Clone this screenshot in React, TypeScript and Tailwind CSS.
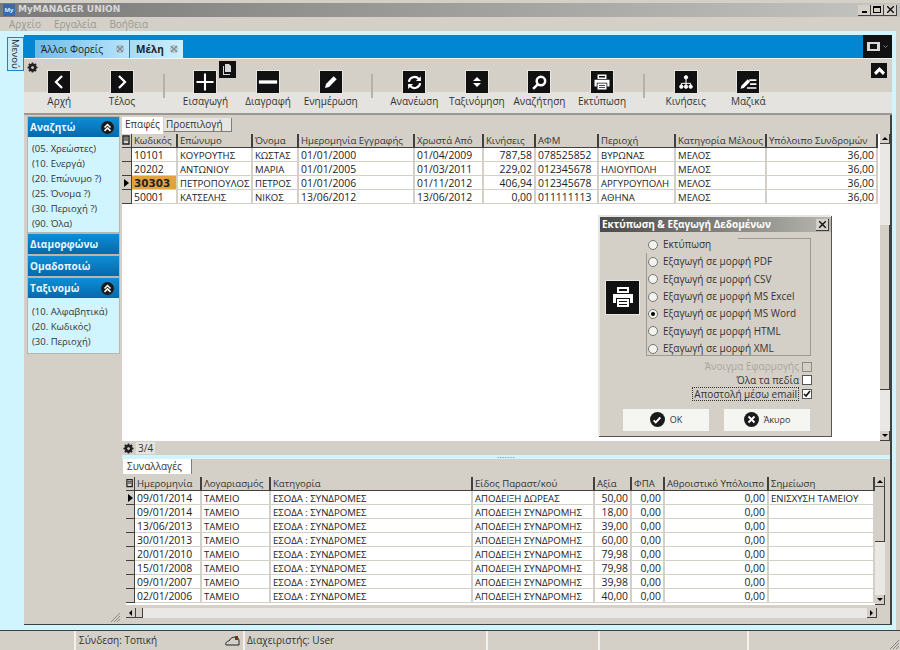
import type { ReactNode } from "react";

const ICON = "h-[24px] w-[24px] bg-[#111111] border border-[#e8e6e0] flex items-center justify-center text-white";

function Svg({ children, size = 18 }: { children: ReactNode; size?: number }) {
  return (
    <svg width={size} height={size} viewBox="0 0 24 24" fill="none" stroke="currentColor" strokeWidth="3" strokeLinecap="square" strokeLinejoin="miter">
      {children}
    </svg>
  );
}

function PrinterGlyph({ size = 18 }: { size?: number }) {
  return (
    <svg width={size} height={size} viewBox="0 0 24 24" fill="currentColor">
      <path fillRule="evenodd" d="M6 2h12v6H6zM8 4v2h8V4z" />
      <path d="M2 9h20v9h-3v-5H5v5H2z" />
      <path fillRule="evenodd" d="M6 14h12v8H6zM8 16v1h8v-1zM8 19v1h8v-1z" />
    </svg>
  );
}

const tools: (null | { label: string; icon: ReactNode })[] = [
  { label: "Αρχή", icon: <Svg><path d="M15 5l-7 7 7 7" /></Svg> },
  { label: "Τέλος", icon: <Svg><path d="M9 5l7 7-7 7" /></Svg> },
  null,
  { label: "Εισαγωγή", icon: <Svg size={20}><path d="M12 3v18M3 12h18" strokeWidth="2.5" /></Svg> },
  { label: "Διαγραφή", icon: <Svg size={20}><path d="M3 12h18" strokeWidth="4" /></Svg> },
  {
    label: "Ενημέρωση",
    icon: (
      <svg width="16" height="16" viewBox="0 0 24 24" fill="currentColor">
        <path d="M3 21l1.5-6L16 3.5l4.5 4.5L9 19.5z" />
      </svg>
    ),
  },
  null,
  {
    label: "Ανανέωση",
    icon: (
      <svg width="17" height="17" viewBox="0 0 24 24" fill="none" stroke="currentColor" strokeWidth="3">
        <path d="M4 11a8 8 0 0 1 14-4l2 2" />
        <path d="M20 13a8 8 0 0 1-14 4l-2-2" />
        <path d="M21 3v7h-7z" fill="currentColor" strokeWidth="0" />
        <path d="M3 21v-7h7z" fill="currentColor" strokeWidth="0" />
      </svg>
    ),
  },
  {
    label: "Ταξινόμηση",
    icon: (
      <svg width="12" height="14" viewBox="0 0 24 24" fill="currentColor">
        <path d="M12 2l8 8H4zM12 22l-8-8h16z" />
      </svg>
    ),
  },
  {
    label: "Αναζήτηση",
    icon: (
      <svg width="17" height="17" viewBox="0 0 24 24" fill="none" stroke="currentColor" strokeWidth="3.5">
        <circle cx="14" cy="10" r="6" />
        <path d="M9.5 14.5L3 21" />
      </svg>
    ),
  },
  { label: "Εκτύπωση", icon: <PrinterGlyph /> },
  null,
  {
    label: "Κινήσεις",
    icon: (
      <svg width="16" height="16" viewBox="0 0 24 24" fill="currentColor" stroke="currentColor" strokeWidth="1.5">
        <circle cx="12" cy="5" r="2.5" />
        <circle cx="5" cy="19" r="2.5" />
        <circle cx="12" cy="19" r="2.5" />
        <circle cx="19" cy="19" r="2.5" />
        <path d="M12 5v14M5 19v-5h14v5" fill="none" />
      </svg>
    ),
  },
  {
    label: "Μαζικά",
    icon: (
      <svg width="19" height="19" viewBox="0 0 24 24" fill="currentColor">
        <path d="M2 20l1-4 8-8 3 3-8 8z" />
        <path d="M13 8h9v2h-9zM14 13h8v2h-8zM10 18h12v2H10z" />
      </svg>
    ),
  },
];

function Chevrons() {
  return (
    <span className="h-[13px] w-[13px] rounded-full bg-[#1a1a1a] flex items-center justify-center text-white">
      <svg width="9" height="9" viewBox="0 0 24 24" fill="none" stroke="currentColor" strokeWidth="4">
        <path d="M4 12l8-8 8 8M4 21l8-8 8 8" />
      </svg>
    </span>
  );
}

function Gear({ size = 11 }: { size?: number }) {
  return (
    <svg width={size} height={size} viewBox="0 0 24 24" className="text-[#222222]">
      <circle cx="12" cy="12" r="6.5" fill="none" stroke="currentColor" strokeWidth="5" />
      <path d="M12 1v22M1 12h22M4.2 4.2l15.6 15.6M19.8 4.2L4.2 19.8" stroke="currentColor" strokeWidth="3.5" />
      <circle cx="12" cy="12" r="3" fill="#d4d0c8" />
    </svg>
  );
}

function SideGroup({ title, items, pad }: { title: string; items?: string[]; pad?: string }) {
  return (
    <div className="border border-[#b8b6ae]">
      <div className="h-[20px] bg-gradient-to-b from-[#0d8ed6] to-[#0669ac] flex items-center justify-between pl-[2px] pr-[5px] text-[10px] font-bold tracking-[0.1px] text-[#eaf6ff]">
        <span>{title}</span>
        {items ? <Chevrons /> : null}
      </div>
      {items ? (
        <div className={`bg-[#d0f5ff] pl-[4px] flex flex-col ${pad ?? ""}`}>
          {items.map((t) => (
            <div key={t} className="h-[15px] leading-[15px] text-[9.5px] text-[#333333] whitespace-nowrap">
              {t}
            </div>
          ))}
        </div>
      ) : null}
    </div>
  );
}

function RowHead({ arrow }: { arrow?: boolean }) {
  return (
    <div className="bg-[#d4d0c8] border-r border-b border-[#404040] flex items-center justify-center">
      {arrow ? <span className="h-0 w-0 border-y-[4px] border-l-[5px] border-y-transparent border-l-black" /> : null}
    </div>
  );
}

type Col = { r?: boolean };

function DataGrid({
  cols,
  template,
  head,
  rows,
  active,
}: {
  cols: Col[];
  template: string;
  head: string[];
  rows: string[][];
  active?: boolean;
}) {
  return (
    <div className={`grid ${template} auto-rows-[14px] text-[#222222]`}>
      <div className="h-[15px] bg-[#d4d0c8] border-r border-b-2 border-[#404040] flex items-start justify-center">
        <svg width="9" height="11" viewBox="0 0 9 11" className="mt-[1px]">
          <path d="M1 1h6v8H1z" fill="none" stroke="#222" strokeWidth="1.4" />
          <path d="M2 3h4M2 5h4" stroke="#222" />
        </svg>
      </div>
      {head.map((h) => (
        <div key={h} className="h-[15px] leading-[14px] text-[9.6px] bg-[#d4d0c8] border-b-2 border-r-2 border-b-[#404040] border-r-[#404040] pl-[2px] overflow-hidden whitespace-nowrap text-[#333333]">
          {h}
        </div>
      ))}
      {rows.map((row, ri) => [
        <RowHead key={`h${ri}`} arrow={active ? ri === 2 : ri === 0} />,
        ...row.map((c, ci) => {
          const hot = active && ri === 2 && ci === 0;
          const num = /^[\d/,]+$/.test(c);
          return (
            <div
              key={`${ri}-${ci}`}
              className={`leading-[15px] border-r-2 border-b border-[#d4d0c8] px-[2px] overflow-hidden whitespace-nowrap ${num ? "text-[10.4px]" : "text-[9.6px]"} ${cols[ci].r ? "text-right" : ""} ${hot ? "bg-[#e4a23c] font-['DejaVu_Sans'] font-bold" : "bg-white"}`}
            >
              {c}
            </div>
          );
        }),
      ])}
    </div>
  );
}

function VScroll({ children }: { children: ReactNode }) {
  return (
    <div className="w-[10px] flex flex-col bg-[#e9e8e4] shrink-0">
      <ScrollBtn dir="up" />
      {children}
      <div className="flex-1" />
      <ScrollBtn dir="down" />
    </div>
  );
}

function ScrollBtn({ dir }: { dir: "up" | "down" | "left" | "right" }) {
  const tri =
    dir === "up"
      ? "border-x-[3px] border-b-[3px] border-x-transparent border-b-black"
      : dir === "down"
        ? "border-x-[3px] border-t-[3px] border-x-transparent border-t-black"
        : dir === "left"
          ? "border-y-[3px] border-r-[3px] border-y-transparent border-r-black"
          : "border-y-[3px] border-l-[3px] border-y-transparent border-l-black";
  return (
    <div className="h-[10px] w-[10px] shrink-0 bg-[#d4d0c8] border-r border-b border-[#404040] flex items-center justify-center">
      <span className={`h-0 w-0 ${tri}`} />
    </div>
  );
}

const topCols: Col[] = [{}, {}, {}, {}, {}, { r: true }, {}, {}, {}, { r: true }];
const topHead = ["Κωδικός", "Επώνυμο", "Όνομα", "Ημερομηνία Εγγραφής", "Χρωστά Από", "Κινήσεις", "ΑΦΜ", "Περιοχή", "Κατηγορία Μέλους", "Υπόλοιπο Συνδρομών"];
const topRows = [
  ["10101", "ΚΟΥΡΟΥΤΗΣ", "ΚΩΣΤΑΣ", "01/01/2000", "01/04/2009", "787,58", "078525852", "ΒΥΡΩΝΑΣ", "ΜΕΛΟΣ", "36,00"],
  ["20202", "ΑΝΤΩΝΙΟΥ", "ΜΑΡΙΑ", "01/01/2005", "01/03/2011", "229,02", "012345678", "ΗΛΙΟΥΠΟΛΗ", "ΜΕΛΟΣ", "36,00"],
  ["30303", "ΠΕΤΡΟΠΟΥΛΟΣ", "ΠΕΤΡΟΣ", "01/01/2006", "01/11/2012", "406,94", "012345678", "ΑΡΓΥΡΟΥΠΟΛΗ", "ΜΕΛΟΣ", "36,00"],
  ["50001", "ΚΑΤΣΕΛΗΣ", "ΝΙΚΟΣ", "13/06/2012", "13/06/2012", "0,00", "011111113", "ΑΘΗΝΑ", "ΜΕΛΟΣ", "36,00"],
];

const lowCols: Col[] = [{}, {}, {}, {}, { r: true }, { r: true }, { r: true }, {}];
const lowHead = ["Ημερομηνία", "Λογαριασμός", "Κατηγορία", "Είδος Παραστ/κού", "Αξία", "ΦΠΑ", "Αθροιστικό Υπόλοιπο", "Σημείωση"];
const lowData: [string, string, string, string][] = [
  ["09/01/2014", "ΑΠΟΔΕΙΞΗ ΔΩΡΕΑΣ", "50,00", "ΕΝΙΣΧΥΣΗ ΤΑΜΕΙΟΥ"],
  ["09/01/2014", "ΑΠΟΔΕΙΞΗ ΣΥΝΔΡΟΜΗΣ", "18,00", ""],
  ["13/06/2013", "ΑΠΟΔΕΙΞΗ ΣΥΝΔΡΟΜΗΣ", "39,00", ""],
  ["30/01/2013", "ΑΠΟΔΕΙΞΗ ΣΥΝΔΡΟΜΗΣ", "60,00", ""],
  ["20/01/2010", "ΑΠΟΔΕΙΞΗ ΣΥΝΔΡΟΜΗΣ", "79,98", ""],
  ["15/01/2008", "ΑΠΟΔΕΙΞΗ ΣΥΝΔΡΟΜΗΣ", "79,98", ""],
  ["09/01/2007", "ΑΠΟΔΕΙΞΗ ΣΥΝΔΡΟΜΗΣ", "39,98", ""],
  ["02/01/2006", "ΑΠΟΔΕΙΞΗ ΣΥΝΔΡΟΜΗΣ", "40,00", ""],
];
const lowRows = lowData.map(([d, e, v, n]) => [d, "ΤΑΜΕΙΟ", "ΕΣΟΔΑ : ΣΥΝΔΡΟΜΕΣ", e, v, "0,00", "0,00", n]);

const radios = ["Εκτύπωση", "Εξαγωγή σε μορφή PDF", "Εξαγωγή σε μορφή CSV", "Εξαγωγή σε μορφή MS Excel", "Εξαγωγή σε μορφή MS Word", "Εξαγωγή σε μορφή HTML", "Εξαγωγή σε μορφή XML"];

function PrintDialog() {
  return (
    <div className="absolute left-[598px] top-[215px] w-[233px] h-[221px] bg-[#d4d0c8] border-t-2 border-l-2 border-[#e8e6e0] shadow-[1px_1px_0_#555555] px-[5px] text-[10px] text-[#333333] flex flex-col">
      <div className="-mx-[5px] h-[15px] bg-gradient-to-r from-[#4a4a4a] to-[#b8b8b0] flex items-center justify-between pl-[2px] pr-[2px] text-[10px] font-bold text-white">
        <span>Εκτύπωση &amp; Εξαγωγή Δεδομένων</span>
        <span className="h-[12px] w-[13px] bg-[#d4d0c8] border-r border-b border-[#404040] flex items-center justify-center">
          <svg width="7" height="7" viewBox="0 0 7 7" stroke="#111" strokeWidth="1.4">
            <path d="M0 0l7 7M7 0L0 7" />
          </svg>
        </span>
      </div>
      <div className="flex mt-[6px]">
        <div className="w-[41px] flex items-center">
          <div className="h-[35px] w-[35px] bg-[#111111] border border-[#e8e6e0] flex items-center justify-center text-white">
            <PrinterGlyph size={24} />
          </div>
        </div>
        <div className="w-[165px] h-[118px] border border-[#9c9a92] pl-[1px] flex flex-col">
          <div className="-mt-[3px] flex flex-col">
            {radios.map((r, i) => (
              <div
                key={r}
                className={`h-[17.33px] flex items-center gap-[5px] shrink-0 whitespace-nowrap ${i === 0 ? "w-[92px] -ml-[2px] pl-[2px] bg-[#d4d0c8]" : ""}`}
              >
                <span className="h-[10px] w-[10px] rounded-full bg-[#f4f3ef] border border-[#77756e] flex items-center justify-center">
                  {i === 4 ? <span className="h-[4px] w-[4px] rounded-full bg-black" /> : null}
                </span>
                {r}
              </div>
            ))}
          </div>
        </div>
      </div>
      <div className="mt-[4px] pr-[14px] flex flex-col items-end">
        <div className="h-[13.5px] flex items-center gap-[3px] text-[#a8a69e]">
          Άνοιγμα Εφαρμογής <span className="h-[10px] w-[10px] border border-[#8e8c85]" />
        </div>
        <div className="h-[13.5px] flex items-center gap-[3px]">
          Όλα τα πεδία <span className="h-[10px] w-[10px] bg-white border border-[#555555]" />
        </div>
        <div className="h-[13.5px] flex items-center gap-[3px]">
          <span className="border border-dotted border-[#333333] px-[1px] leading-[12px]">Αποστολή μέσω email</span>
          <span className="h-[10px] w-[10px] bg-white border border-[#555555] flex items-center justify-center">
            <svg width="8" height="8" viewBox="0 0 8 8" fill="none" stroke="#111" strokeWidth="1.6">
              <path d="M1 4l2 2 4-5" />
            </svg>
          </span>
        </div>
      </div>
      <div className="mt-[8px] pl-[18px] flex gap-[15px] text-[9px]">
        <div className="h-[22px] w-[86px] bg-[#f5f5f2] flex items-center justify-center gap-[5px]">
          <span className="h-[15px] w-[15px] rounded-full bg-[#1a1a1a] flex items-center justify-center text-white">
            <svg width="10" height="10" viewBox="0 0 24 24" fill="none" stroke="currentColor" strokeWidth="4.5">
              <path d="M4 13l5 5L20 6" />
            </svg>
          </span>
          OK
        </div>
        <div className="h-[22px] w-[86px] bg-[#f5f5f2] flex items-center justify-center gap-[5px]">
          <span className="h-[15px] w-[15px] rounded-full bg-[#1a1a1a] flex items-center justify-center text-white">
            <svg width="9" height="9" viewBox="0 0 24 24" fill="none" stroke="currentColor" strokeWidth="5">
              <path d="M4 4l16 16M20 4L4 20" />
            </svg>
          </span>
          Άκυρο
        </div>
      </div>
    </div>
  );
}

function CloseX() {
  return (
    <svg width="8" height="8" viewBox="0 0 8 8" stroke="#8a8a88" strokeWidth="1.6">
      <path d="M1 1l6 6M7 1L1 7" />
      <circle cx="4" cy="4" r="3.4" fill="none" strokeWidth="0.6" />
    </svg>
  );
}

export default function App() {
  return (
    <div className="relative w-[900px] h-[650px] overflow-hidden bg-[#d4d0c8] pt-[3px] font-['Open_Sans',sans-serif] flex flex-col">
      {/* title bar */}
      <div className="h-[14px] shrink-0 bg-gradient-to-r from-[#7a7a7a] to-[#c4c4c0] flex items-center justify-between pl-[3px] pr-[3px]">
        <div className="flex items-center gap-[3px]">
          <span className="h-[12px] w-[12px] bg-[#3a6aa8] text-[6px] font-bold text-[#dde8f5] flex items-center justify-center">My</span>
          <span className="font-['DejaVu_Sans'] text-[9px] font-bold text-[#d8d8d8]">MyMANAGER UNION</span>
        </div>
        <div className="flex">
          {["min", "max", "close"].map((b) => (
            <span key={b} className="h-[11px] w-[13px] bg-[#d4d0c8] border-r border-b border-[#404040] flex items-center justify-center">
              {b === "min" ? <span className="h-[2px] w-[5px] bg-black mt-[5px]" /> : null}
              {b === "max" ? <span className="h-[7px] w-[8px] border border-black border-t-2" /> : null}
              {b === "close" ? (
                <svg width="7" height="7" viewBox="0 0 7 7" stroke="#111" strokeWidth="1.4">
                  <path d="M0 0l7 7M7 0L0 7" />
                </svg>
              ) : null}
            </span>
          ))}
        </div>
      </div>
      {/* menu */}
      <div className="h-[14px] shrink-0 flex items-center gap-[13px] pl-[9px] text-[10px] text-[#9a9890]">
        <span>Αρχείο</span>
        <span>Εργαλεία</span>
        <span>Βοήθεια</span>
      </div>

      <div className="flex-1 min-h-0 flex pr-[4px]">
        <div className="flex-1 min-w-0 bg-[#d0f5ff] pt-[4px] flex">
          {/* left strip */}
          <div className="w-[24px] shrink-0 pl-[7px] pt-[2px]">
            <div className="h-[34px] w-[17px] bg-[#c8ecfa] border border-[#2a7fc0] flex items-center justify-center">
              <span className="[writing-mode:vertical-rl] text-[9.5px] leading-none text-[#222222]">Μενού</span>
            </div>
          </div>
          <div className="w-[868px] shrink-0 flex flex-col">
            {/* tab bar */}
            <div className="h-[23px] shrink-0 bg-[#0086d2] flex items-end justify-between pl-[11px]">
              <div className="flex gap-[1px]">
                <div className="h-[18px] w-[94px] bg-gradient-to-r from-[#6cbdea] to-[#b8e4fb] flex items-center justify-between pl-[6px] pr-[5px] text-[10px] text-[#222222]">
                  Άλλοι Φορείς <CloseX />
                </div>
                <div className="h-[18px] w-[53px] bg-gradient-to-r from-[#a4dcf8] to-[#cfeffd] flex items-center justify-between pl-[6px] pr-[5px] text-[10px] font-bold text-[#222222]">
                  Μέλη <CloseX />
                </div>
              </div>
              <div className="h-[23px] w-[29px] bg-[#111111] flex items-center gap-[3px] pl-[4px]">
                <span className="h-[9px] w-[13px] bg-[#d8d8d8] flex items-center justify-center">
                  <span className="h-[5px] w-[7px] bg-[#111111]" />
                </span>
                <svg width="5" height="4" viewBox="0 0 5 4" stroke="#888888" fill="none">
                  <path d="M0.5 0.5l2 2 2-2" />
                </svg>
              </div>
            </div>

            {/* toolbar */}
            <div className="relative h-[57px] shrink-0 border-t border-[#f2f1ec] border-b-2 border-b-[#9a9890] bg-[linear-gradient(#d4d0c8_0,#d4d0c8_60%,#e4e3df_62%,#e4e3df_100%)] pl-[4px] flex">
              {tools.map((t, i) =>
                t ? (
                  <div key={t.label} className="w-[62.6px] shrink-0 pt-[11px] flex flex-col items-center">
                    <div className={ICON}>{t.icon}</div>
                    <span className="mt-[1px] text-[10px] leading-[13px] text-[#333333] whitespace-nowrap">{t.label}</span>
                  </div>
                ) : (
                  <div key={i} className="w-[21px] shrink-0 flex justify-center pt-[15px]">
                    <div className="w-[2px] h-[24px] bg-[#b4b2aa]" />
                  </div>
                ),
              )}
              <div className="absolute left-[3px] top-[3px]">
                <Gear />
              </div>
              <div className="absolute left-[195px] top-[2px] h-[17px] w-[17px] bg-[#111111] flex items-center justify-center">
                <svg width="10" height="11" viewBox="0 0 10 11" fill="#d8d8d8">
                  <path d="M2 0h4l2 2v6H2z" />
                  <path d="M0 2h1v8h6v1H0z" />
                </svg>
              </div>
              <div className="absolute right-[5px] top-[4px] h-[15px] w-[16px] bg-[#111111] flex items-center justify-center">
                <svg width="11" height="8" viewBox="0 0 11 8" fill="#ffffff">
                  <path d="M5.5 0L11 5.5 9 8 5.5 4.5 2 8 0 5.5z" />
                </svg>
              </div>
            </div>

            {/* main area */}
            <div className="flex-1 min-h-0 flex border-r-2 border-[#404040] bg-[#d4d0c8] border-b border-b-[#404040]">
              {/* side menu */}
              <div className="relative w-[98px] shrink-0 pl-[3px] pr-[2px] pt-[1px] flex flex-col">
                <SideGroup title="Αναζητώ" pad="pt-[4px] pb-[1px]" items={["(05. Χρεώστες)", "(10. Ενεργά)", "(20. Επώνυμο ?)", "(25. Όνομα ?)", "(30. Περιοχή ?)", "(90. Όλα)"]} />
                <SideGroup title="Διαμορφώνω" />
                <SideGroup title="Ομαδοποιώ" />
                <SideGroup title="Ταξινομώ" pad="pt-[6px] pb-[4px]" items={["(10. Αλφαβητικά)", "(20. Κωδικός)", "(30. Περιοχή)"]} />
                <svg width="9" height="9" viewBox="0 0 9 9" stroke="#888888" className="absolute right-[2px] bottom-[2px]">
                  <path d="M0 9l9-9M3 9l6-6M6 9l3-3" />
                </svg>
              </div>

              {/* content */}
              <div className="flex-1 min-w-0 flex flex-col">
                <div className="h-[19px] shrink-0 flex items-end text-[10px] text-[#333333]">
                  <div className="h-[17px] w-[41px] bg-white pl-[3px] leading-[14px]">Επαφές</div>
                  <div className="h-[14px] mb-[2px] ml-[1px] w-[68px] bg-[#e8e6e2] border-r border-b border-[#807e78] pl-[2px] leading-[13px]">Προεπιλογή</div>
                </div>
                <div className="h-[307px] shrink-0 flex">
                  <div className="flex-1 min-w-0 bg-white">
                    <DataGrid
                      cols={topCols}
                      template="grid-cols-[10px_46px_75px_46px_116px_69px_52px_63px_77px_91px_111px]"
                      head={topHead}
                      rows={topRows}
                      active
                    />
                  </div>
                  <VScroll>
                    <div className="h-[81px]" />
                    <div className="h-[165px] bg-[#d4d0c8] border-r border-b border-[#404040]" />
                  </VScroll>
                </div>
                <div className="h-[14px] shrink-0 flex items-center gap-[2px] pl-[1px] text-[10px] text-[#333333]">
                  <Gear />
                  <span className="bg-[#e4e3df] px-[2px] leading-[12px]">3/4</span>
                </div>
                <div className="h-[4px] shrink-0 bg-[#d0f5ff] flex justify-center">
                  <span className="text-[8px] leading-[0px] text-[#555555] tracking-[0.5px]">.......</span>
                </div>
                <div className="h-[15px] shrink-0 pl-[1px] text-[10px] text-[#333333]">
                  <div className="h-[15px] w-[69px] bg-white pl-[4px] border-r border-[#807e78] leading-[15px]">Συναλλαγές</div>
                </div>
                <div className="mt-[3px] ml-[4px] h-[128px] shrink-0 flex">
                  <div className="w-[749px] bg-white">
                    <DataGrid
                      cols={lowCols}
                      template="grid-cols-[9px_67px_69px_202px_122px_37px_33px_104px_106px]"
                      head={lowHead}
                      rows={lowRows}
                    />
                  </div>
                  <VScroll>
                    <div className="h-[55px] bg-[#d4d0c8] border-r border-b border-[#404040]" />
                  </VScroll>
                </div>
                <div className="mt-[3px] ml-[4px] w-[751px] h-[10px] bg-[#e9e8e4] flex justify-between">
                  <div className="flex">
                    <ScrollBtn dir="left" />
                    <div className="h-[10px] w-[7px] bg-[#d4d0c8] border-r border-b border-[#404040]" />
                  </div>
                  <ScrollBtn dir="right" />
                </div>
              </div>
            </div>
            <div className="h-[5px] shrink-0" />
          </div>
        </div>
      </div>

      {/* status bar */}
      <div className="h-[20px] shrink-0 border-t border-[#404040] flex text-[10px] text-[#333333]">
        <div className="w-[76px] border-r-2 border-[#f2f1ec]" />
        <div className="w-[169px] border-r-2 border-[#f2f1ec] pl-[3px] flex items-center justify-between pr-[3px]">
          Σύνδεση: Τοπική
          <svg width="15" height="11" viewBox="0 0 15 11" fill="none" stroke="#222222">
            <path d="M1 10c-1-2 1-4 3-4 1-3 4-4 7-4 2 0 3 2 3 4v4z" />
            <path d="M10 1h3v4h-3z" fill="#8b2a1a" stroke="none" />
          </svg>
        </div>
        <div className="w-[243px] border-r-2 border-[#f2f1ec] pl-[2px] flex items-center">Διαχειριστής: User</div>
        <div className="w-[112px] border-r-2 border-[#f2f1ec]" />
        <div className="w-[149px] border-r-2 border-[#f2f1ec]" />
        <div className="relative flex-1">
          <svg width="9" height="9" viewBox="0 0 9 9" stroke="#888888" className="absolute right-[1px] bottom-[1px]">
            <path d="M0 9l9-9M3 9l6-6M6 9l3-3" />
          </svg>
        </div>
      </div>

      <PrintDialog />
    </div>
  );
}
